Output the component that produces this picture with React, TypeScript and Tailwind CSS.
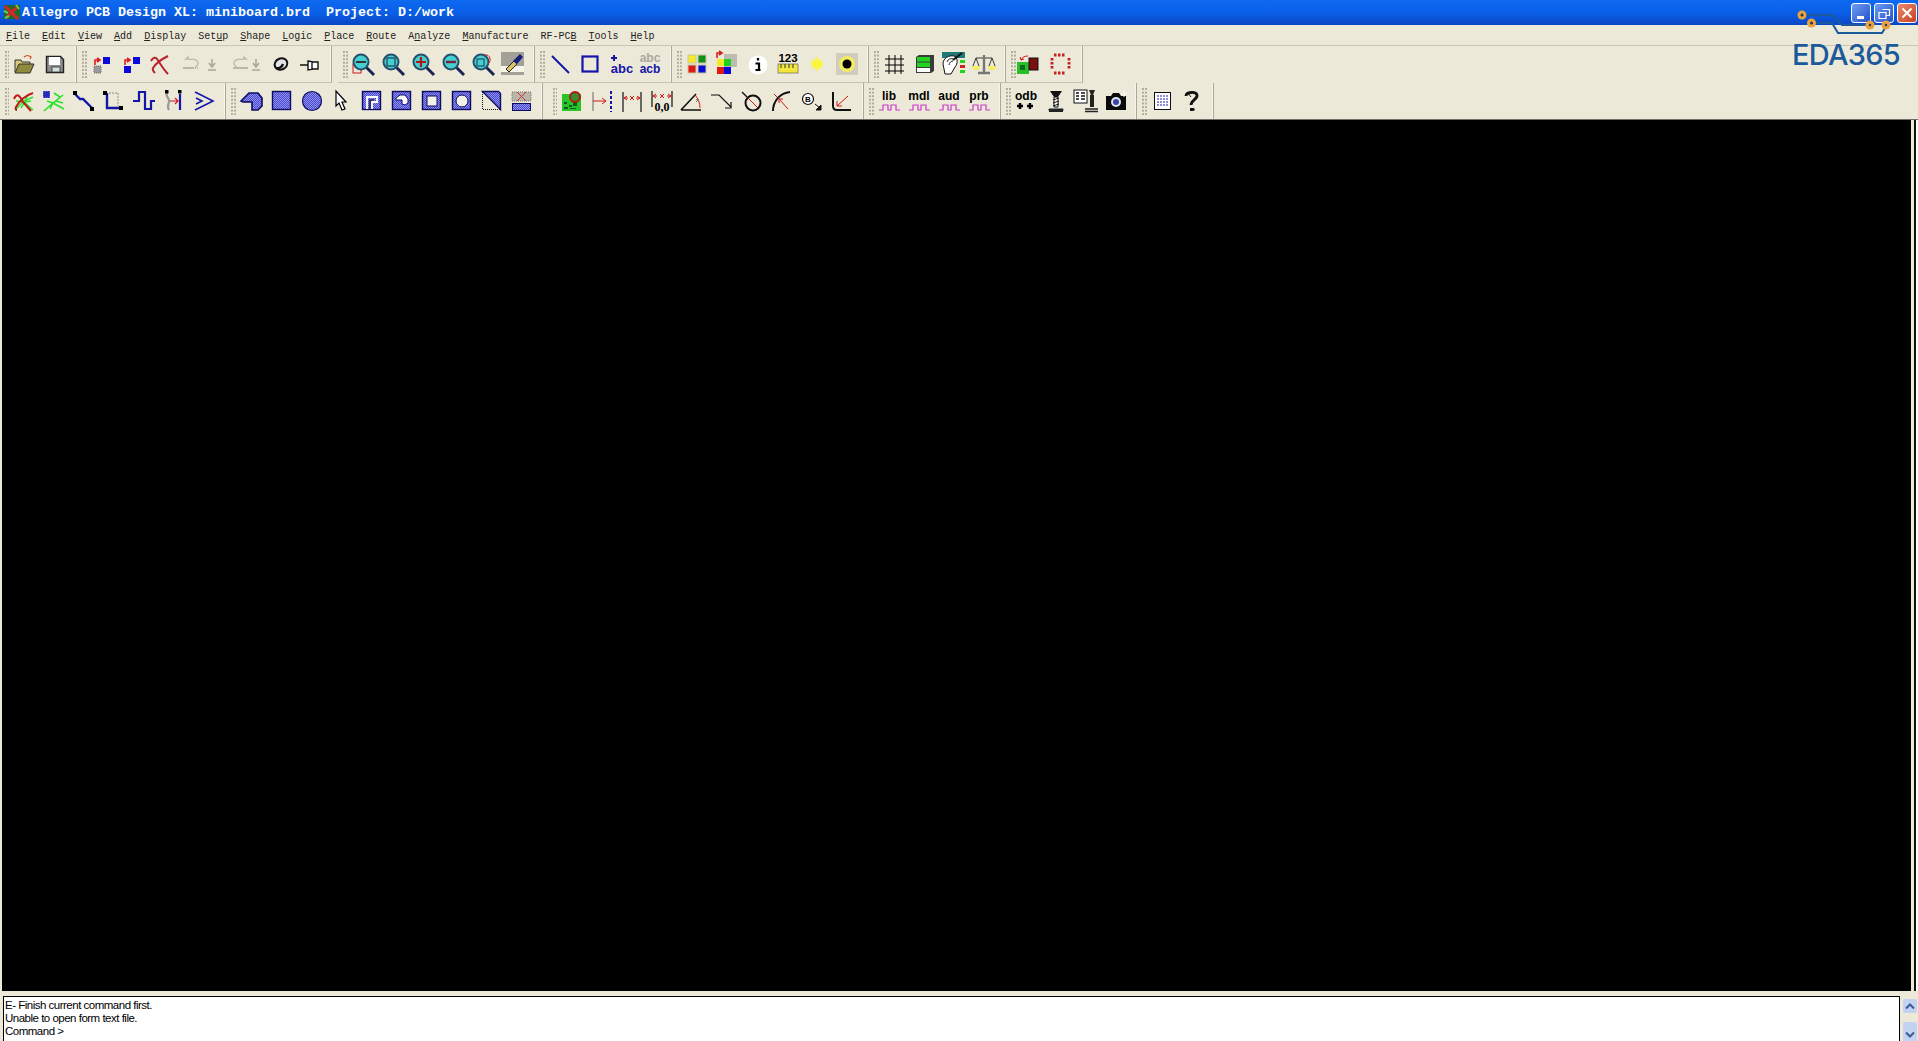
import React from 'react';

const BLUE = '#1515a8';
const HATCH = 'url(#hatch)';
const sans = '"Liberation Sans", Arial, sans-serif';

const Ico = ({ w = 24, children }: { w?: number; children: React.ReactNode }) => (
  <svg width={w} height={24} viewBox={`0 0 ${w} 24`} className="block overflow-visible">
    {children}
  </svg>
);

const Btn = ({ w = 24, children }: { w?: number; children: React.ReactNode }) => (
  <div className="flex h-full flex-none items-center px-[3px]">
    <Ico w={w}>{children}</Ico>
  </div>
);

const Grip = ({ width }: { width: string }) => (
  <div className={`flex h-full flex-none items-center ${width}`}>
    <svg width={10} height={28} className="block">
      {[0, 1, 2, 3, 4, 5, 6, 7].map((i) => (
        <g key={i} fill="#b1aea0">
          <rect x={5} y={1 + i * 3.6} width={2} height={2} />
          <rect x={8} y={1 + i * 3.6} width={2} height={2} />
        </g>
      ))}
    </svg>
  </div>
);

const Group = ({ width, grip = 'w-[10px]', children }: { width: string; grip?: string; children: React.ReactNode }) => (
  <div className={`flex h-full flex-none items-center border-r border-r-[#aaa899] shadow-[inset_-1px_0_0_#f7f5ea] ${width}`}>
    <Grip width={grip} />
    {children}
  </div>
);

// small red bent arrow used on the swap icons
const BentArrow = ({ x, y }: { x: number; y: number }) => (
  <path d={`M${x} ${y + 6}v-5h4m-2-2l3 2l-3 2`} fill="none" stroke="#d81e1e" strokeWidth={1.6} />
);

const Loupe = ({ children }: { children?: React.ReactNode }) => (
  <>
    <line x1={15} y1={15} x2={23} y2={23} stroke="#1a2355" strokeWidth={3} />
    <circle cx={10} cy={10} r={7.5} fill="#45cfd0" stroke="#27506a" strokeWidth={2} />
    {children}
  </>
);

const Label = ({ x, y, size, fill = '#000', children }: { x: number; y: number; size: number; fill?: string; children: React.ReactNode }) => (
  <text x={x} y={y} fontSize={size} fontWeight={700} fontFamily={sans} fill={fill} textAnchor="middle">
    {children}
  </text>
);

const Pulse = ({ name }: { name: string }) => (
  <>
    <Label x={12} y={11} size={12}>{name}</Label>
    <path d="M2 21h4v-5h5v5h3v-5h5v5h4" fill="none" stroke="#c83cc8" strokeWidth={1.2} />
  </>
);

const Row1 = () => (
  <div className="flex h-[37px] items-center [&>div]:border-b [&>div]:border-b-[#c6c3b3]">
    <Group width="w-[77px]" grip="w-[9px]">
      <Btn>
        <path d="M3 20V8h6l1 2h8v3" fill="#d8c878" stroke="#333" strokeWidth={1} />
        <path d="M3 21l4-9h15l-4 9z" fill="#8f8a3c" stroke="#333" strokeWidth={1} />
        <path d="M12 5c2-2 5-2 7 0l-1 2" fill="none" stroke="#d84a2a" strokeWidth={1.2} />
      </Btn>
      <Btn>
        <path d="M3.5 4.5h14l3 3v13h-17z" fill="#8e8e8e" stroke="#222" strokeWidth={1.4} transform="translate(1 0)" />
        <rect x={7} y={5} width={11} height={8} fill="#fff" />
        <rect x={10} y={15} width={8} height={5} fill="#d6e0e0" stroke="#333" strokeWidth={0.8} />
      </Btn>
    </Group>
    <Group width="w-[255px]">
      <Btn>
        <rect x={13} y={5} width={7} height={7} fill="#0a0ad8" />
        <rect x={4} y={14} width={7} height={7} fill="#999" stroke="#666" strokeDasharray="1 1" />
        <BentArrow x={5} y={7} />
      </Btn>
      <Btn>
        <rect x={13} y={5} width={7} height={7} fill="#0a0ad8" />
        <rect x={4} y={14} width={7} height={7} fill="#0a0ad8" />
        <BentArrow x={5} y={7} />
      </Btn>
      <Btn>
        <g transform="translate(-2 0)">
          <path d="M3 9c2-4 5-4 6-2c3 4 6 10 11 15M20 4C14 7 8 11 5 16c-1 2 0 3 2 5" fill="none" stroke="#b8232d" strokeWidth={2} />
        </g>
      </Btn>
      <Btn w={44}>
        <path d="M5 8l3-3v2.500c5-1 10 0 10 4c0 2-2 3-3 3" fill="none" stroke="#b9b8a8" strokeWidth={1.2} />
        <path d="M3 16h10" stroke="#b9b8a8" strokeWidth={2} />
        <path d="M13 16h6" stroke="#b9b8a8" strokeWidth={2} strokeDasharray="1 1" />
        <path d="M32 7v7m-3-3l3 4l3-4M28 18h8" fill="none" stroke="#a8a898" strokeWidth={1.5} />
      </Btn>
      <Btn w={34}>
        <path d="M17 8l-3-3v2.500c-5-1-10 0-10 4c0 2 2 3 3 3" fill="none" stroke="#b9b8a8" strokeWidth={1.2} />
        <path d="M3 16h15" stroke="#b9b8a8" strokeWidth={2} />
        <path d="M26 7v7m-3-3l3 4l3-4M22 18h8" fill="none" stroke="#a8a898" strokeWidth={1.5} />
      </Btn>
      <Btn>
        <g transform="translate(-2 0)">
          <ellipse cx={13} cy={12} rx={6.500} ry={5.500} fill="#e4e4e4" stroke="#111" strokeWidth={2} transform="rotate(-25 13 12)" />
          <path d="M8 16c3 1 6-1 7-4" fill="none" stroke="#111" strokeWidth={2.400} />
        </g>
      </Btn>
      <Btn>
        <g transform="translate(-2 0)">
          <path d="M2 13h8M10 9l5 1h5v7h-5l-5 1zM14 9v9" fill="#fff" stroke="#111" strokeWidth={1.4} />
        </g>
      </Btn>
    </Group>
    <Group width="ml-[6px] w-[197px]">
      <Btn>
        <rect x={2} y={12} width={8} height={9} fill="none" stroke="#d01818" strokeWidth={1} />
        <Loupe><path d="M5 10h10" stroke="#333" strokeWidth={2} /></Loupe>
      </Btn>
      <Btn>
        <Loupe><rect x={6} y={6} width={8} height={8} fill="none" stroke="#27506a" strokeWidth={1.4} /></Loupe>
      </Btn>
      <Btn>
        <Loupe><path d="M5 10h10M10 5v10" stroke="#b01818" strokeWidth={2.2} /></Loupe>
      </Btn>
      <Btn>
        <Loupe><path d="M5 10h10" stroke="#7a1f3a" strokeWidth={2.4} /></Loupe>
      </Btn>
      <Btn>
        <Loupe><rect x={6} y={7} width={7} height={7} fill="none" stroke="#27506a" strokeWidth={1.2} /></Loupe>
        <path d="M14 3c5-1 7 6 3 9" fill="none" stroke="#d01818" strokeWidth={1} />
      </Btn>
      <Btn>
        <rect x={0} y={0} width={23} height={23} fill="#a3a197" />
        <rect x={0} y={14} width={23} height={6} fill="#f6f4ea" />
        <path d="M5 17l8-8l3 3l-8 8z" fill="#d8c468" stroke="#222" strokeWidth={1} />
        <path d="M12 9l7-7l3 3l-6 7z" fill="#161e7a" />
      </Btn>
    </Group>
    <Group width="w-[137px]">
      <Btn><path d="M4 4l17 17" stroke={BLUE} strokeWidth={2} /></Btn>
      <Btn><rect x={4.5} y={4.5} width={15} height={15} fill="none" stroke={BLUE} strokeWidth={2.2} /></Btn>
      <Btn>
        <path d="M6 3v6M3 6h6" stroke={BLUE} strokeWidth={2} />
        <Label x={14} y={21} size={13} fill={BLUE}>abc</Label>
      </Btn>
      <Btn>
        <Label x={12} y={10} size={12} fill="#aaa89c">abc</Label>
        <Label x={12} y={21} size={12} fill={BLUE}>acb</Label>
      </Btn>
    </Group>
    <Group width="w-[197px]">
      <Btn>
        <g transform="translate(-1 0)">
          <rect x={4} y={3} width={8} height={8} fill="#f5ea28" stroke="#c8c8a0" />
          <rect x={14} y={3} width={8} height={8} fill="#109018" stroke="#c8c8a0" />
          <rect x={4} y={13} width={8} height={8} fill="#e01818" stroke="#c8c8a0" />
          <rect x={14} y={13} width={8} height={8} fill="#0a0ad8" stroke="#c8c8a0" />
        </g>
      </Btn>
      <Btn>
        <g transform="translate(-1 0)">
          <rect x={10} y={2} width={13} height={13} fill="#bdbcb0" />
          <rect x={3} y={7} width={7} height={7} fill="#f5ea28" />
          <rect x={10} y={7} width={7} height={7} fill="#22d022" />
          <rect x={3} y={15} width={7} height={7} fill="#e01818" />
          <rect x={10} y={15} width={7} height={7} fill="#0a0ad8" />
          <BentArrow x={3} y={0} />
        </g>
      </Btn>
      <Btn>
        <circle cx={12} cy={12} r={9.500} fill="#fff" transform="translate(1 1)" />
        <path d="M13 6v2.500M10.500 11.500h3.500v6.500h1.500M10.500 18h5" stroke="#000" strokeWidth={2.2} fill="none" />
      </Btn>
      <Btn>
        <g transform="translate(1 0)">
          <Label x={12} y={10} size={11.5}>123</Label>
          <rect x={2} y={12} width={20} height={9} fill="#f2e63c" stroke="#555" strokeWidth={0.6} />
          <path d="M5 12v4M9 12v4M13 12v4M17 12v4" stroke="#333" strokeWidth={1} />
        </g>
      </Btn>
      <Btn>
        <circle cx={12} cy={12} r={5} fill="#fbf53c" />
        <path d="M12 4v16M4 12h16M7 7l10 10M17 7L7 17" stroke="#fbf53c" strokeWidth={1} />
      </Btn>
      <Btn>
        <rect x={1} y={1} width={22} height={22} fill="#cfcdbf" />
        <circle cx={12} cy={12} r={8} fill="#f3ec60" />
        <circle cx={12} cy={12} r={4.500} fill="#000" />
      </Btn>
    </Group>
    <Group width="w-[137px]">
      <Btn><path d="M7 3v19M13 3v19M19 3v19M3 7h19M3 13h19M3 19h19" stroke="#000" strokeWidth={1} /></Btn>
      <Btn>
        <g transform="translate(1 0)">
          <path d="M3 5l3-2h15v16l-3 2H3z" fill="#3a3a3a" />
          <rect x={4} y={5} width={13} height={4.500} fill="#22d422" />
          <rect x={4} y={10.500} width={13} height={4.500} fill="#22d422" />
          <rect x={4} y={16} width={13} height={4} fill="#fff" />
        </g>
      </Btn>
      <Btn>
        <rect x={0} y={0} width={23} height={6} fill="#1d7a78" />
        <path d="M1 12c0-6 6-9 11-8c4 1 4 8 1 11l-4 7H3z" fill="#fff" stroke="#111" strokeWidth={1} />
        <path d="M5 10c1-3 4-4 6-3M7 13c0-2 2-4 4-4" stroke="#111" fill="none" />
        <path d="M11 8l9-7" stroke="#111" strokeWidth={2} />
        <rect x={18} y={8} width={5} height={3} fill="#22d422" />
        <rect x={18} y={13} width={5} height={3} fill="#d02020" />
        <rect x={18} y={18} width={5} height={3} fill="#22d422" />
      </Btn>
      <Btn>
        <path d="M4 6h16M4 6L1 14M4 6l3 8M20 6l-3 8M20 6l3 8" stroke="#3a3a3a" strokeWidth={1} fill="none" />
        <path d="M12 3v17M6 21h12" stroke="#777" strokeWidth={2.400} />
        <path d="M0 14h8a4 4 0 0 1-8 0zM16 14h8a4 4 0 0 1-8 0z" fill="#f4ee60" />
      </Btn>
    </Group>
    <Group width="w-[77px]">
      <Btn>
        <g transform="translate(-2 0)">
          <rect x={0} y={10} width={12} height={12} fill="#28c028" />
          <rect x={3} y={13} width={5} height={5} fill="#0f6a1e" />
          <rect x={12} y={6} width={9} height={12} fill="#7a0f12" stroke="#111" />
          <path d="M4 8c1-3 4-4 7-4M4 8l-1-3M4 8l3-1" fill="none" stroke="#d01818" strokeWidth={1} />
        </g>
      </Btn>
      <Btn>
        <path d="M5 3h12M3 6v12M20 6v12M5 21h12" fill="none" stroke="#c82020" strokeWidth={2.800} strokeDasharray="2.500 1.500" />
      </Btn>
    </Group>
  </div>
);

const Row2 = () => (
  <div className="flex h-[37px] items-center border-b border-b-[#6f6e66]">
    <Group width="w-[226px]" grip="w-[9px]">
      <Btn>
        <path d="M3 21l9-9l9-4M4 12l8 1l9 8M9 19l4-6l6-1M17 5l-5 8" fill="none" stroke="#2ae22a" strokeWidth={1.4} />
        <path d="M2 10c3-7 6-3 9 3l8 9M21 4C14 6 7 12 4 18c-1 2 0 3 1 3" fill="none" stroke="#c01818" strokeWidth={2} />
      </Btn>
      <Btn>
        <path d="M2 22l9-8l11 6M5 12l6 2l10-8M11 14l-3 6M21 14l-7-2M12 4l6 4" fill="none" stroke="#2ae22a" strokeWidth={1.600} />
        <rect x={1} y={2} width={7} height={7} fill="#2a2ab8" stroke="#fff" strokeWidth={0.5} strokeDasharray="1 1" />
      </Btn>
      <Btn>
        <path d="M3 5l5 5h3l9 9" fill="none" stroke={BLUE} strokeWidth={2.4} />
        <rect x={1} y={2} width={4} height={4} fill="#000" />
        <rect x={18} y={18} width={4} height={4} fill="#000" />
      </Btn>
      <Btn>
        <g transform="translate(-2 0)">
          <path d="M7 4v15h14" fill="none" stroke={BLUE} strokeWidth={2.4} />
          <path d="M9 4h9v13" fill="none" stroke="#aaa" strokeWidth={1.4} strokeDasharray="2 1" />
          <rect x={3} y={2} width={4} height={4} fill="#000" />
          <rect x={19} y={17} width={4} height={4} fill="#000" />
        </g>
      </Btn>
      <Btn>
        <g transform="translate(-1 0)">
          <path d="M2 12h6V3h6v17h6v-8h4" fill="none" stroke={BLUE} strokeWidth={2.2} />
        </g>
      </Btn>
      <Btn>
        <g transform="translate(-1 0)">
          <path d="M6 4c-2 4 3 5 2 9c-1 3-2 5 0 8" fill="none" stroke="#999" strokeWidth={2.2} />
          <path d="M19 5v16" stroke={BLUE} strokeWidth={2.2} />
          <path d="M9 12h8m-3-3l3 3l-3 3" fill="none" stroke="#d01818" strokeWidth={1.2} />
          <rect x={4} y={1} width={3.500} height={3.500} fill="#000" />
          <rect x={17} y={1} width={3.500} height={3.500} fill="#000" />
        </g>
      </Btn>
      <Btn><path d="M3 3l18 9l-18 9M4 9l6 3l-6 3" fill="none" stroke={BLUE} strokeWidth={1.6} /></Btn>
    </Group>
    <Group width="w-[317px]" grip="w-[11px]">
      <Btn><path d="M1 12l8-8h9l4 5v8l-4 4h-6v-8H3z" fill={HATCH} stroke="#0c0c60" strokeWidth={1.6} /></Btn>
      <Btn><rect x={2.500} y={2.500} width={18} height={18} fill={HATCH} stroke="#0c0c60" strokeWidth={1.4} /></Btn>
      <Btn><circle cx={12} cy={12} r={9.500} fill={HATCH} stroke="#0c0c60" strokeWidth={1.2} /></Btn>
      <Btn><path d="M6 2v15l3-3l3 7l3-1l-3-7h4z" fill="#fff" stroke="#000" strokeWidth={1.2} /></Btn>
      <Btn>
        <rect x={2.500} y={2.500} width={18} height={18} fill={HATCH} stroke="#0c0c60" strokeWidth={1.4} />
        <path d="M7 20V8h10v5h-5v7" fill="none" stroke="#fff" strokeWidth={1.800} />
        <path d="M10 20v-9h4" fill="none" stroke="#111" strokeWidth={1.200} />
      </Btn>
      <Btn>
        <rect x={2.500} y={2.500} width={18} height={18} fill={HATCH} stroke="#0c0c60" strokeWidth={1.4} />
        <path d="M6 9l4-3h5l3 4v4l-3 2l-3-1v-4H6z" fill="#fff" stroke="#0c0c60" />
      </Btn>
      <Btn>
        <rect x={2.500} y={2.500} width={18} height={18} fill={HATCH} stroke="#0c0c60" strokeWidth={1.4} />
        <rect x={7} y={7} width={10} height={10} fill="#f2f2e8" stroke="#0c0c60" />
      </Btn>
      <Btn>
        <rect x={2.500} y={2.500} width={18} height={18} fill={HATCH} stroke="#0c0c60" strokeWidth={1.4} />
        <circle cx={12} cy={12} r={6} fill="#f2f2e8" stroke="#0c0c60" />
      </Btn>
      <Btn>
        <path d="M2.500 2.500h16l2 2v16z" fill={HATCH} stroke="#0c0c60" strokeWidth={1.400} />
        <path d="M2.500 3v17.500h18" fill="none" stroke="#111" strokeDasharray="1 1" />
      </Btn>
      <Btn>
        <rect x={2} y={3} width={19} height={9} fill="#b9b7ab" stroke="#777" strokeDasharray="1 1" />
        <path d="M7 3l9 9M16 3l-9 9" stroke="#d83030" strokeWidth={1} />
        <rect x={2.500} y={14.500} width={18} height={7} fill={HATCH} stroke="#0c0c60" />
      </Btn>
    </Group>
    <Group width="ml-[5px] w-[316px]" grip="w-[9px]">
      <Btn>
        <rect x={2} y={5} width={19} height={17} fill="#28c428" />
        <path d="M4 13h3v2H4zM9 16h3v2H9zM13 13h4v4h-4zM4 18h4v2H4zM10 19h6v1h-6z" fill="#0d5c1e" />
        <circle cx={15} cy={8} r={5} fill="#3a8a2a" stroke="#b01818" strokeWidth={2} />
      </Btn>
      <Btn>
        <path d="M3 3v19" stroke="#aaa89c" strokeWidth={2} />
        <path d="M3 12h13m-4-3l4 3l-4 3" fill="none" stroke="#d01818" strokeWidth={1} />
        <path d="M21 2v21" stroke={BLUE} strokeWidth={2} strokeDasharray="3 2" />
      </Btn>
      <Btn>
        <path d="M3 3v20M21 3v20" stroke="#111" strokeWidth={1.2} />
        <path d="M4 9l3-2m-3 2l3 2M4 9h4M20 9l-3-2m3 2l-3 2M20 9h-4M10 7l4 4M14 7l-4 4" fill="none" stroke="#d01818" strokeWidth={1} />
      </Btn>
      <Btn>
        <path d="M2 2v16M22 2v16" stroke="#111" strokeWidth={1.2} />
        <path d="M3 7l3-2m-3 2l3 2M3 7h4M21 7l-3-2m3 2l-3 2M21 7h-4M10 5l4 4M14 5l-4 4" fill="none" stroke="#d01818" strokeWidth={1} />
        <text x={12} y={22} fontSize={12} fontWeight={700} fontFamily='"Liberation Serif", serif' textAnchor="middle" fill="#000">0,0</text>
      </Btn>
      <Btn>
        <path d="M1 21L16 5M1 21h20" stroke="#111" strokeWidth={1.6} />
        <path d="M15 6c3 3 5 8 5 13" fill="none" stroke="#d01818" strokeWidth={1} />
        <path d="M16 10l3 3M19 10l-3 3" stroke="#777" strokeWidth={1} />
      </Btn>
      <Btn>
        <path d="M1 6h8l12 12" fill="none" stroke="#111" strokeWidth={1.2} />
        <path d="M21 13v6h-6" fill="none" stroke="#111" strokeWidth={1.200} />
      </Btn>
      <Btn>
        <g transform="translate(1 0)">
          <path d="M1 3l5 5" stroke="#111" strokeWidth={1.400} />
          <circle cx={12} cy={14} r={7.500} fill="none" stroke="#111" strokeWidth={2} />
          <path d="M7 9l10 10" stroke="#d01818" strokeWidth={1} />
        </g>
      </Btn>
      <Btn>
        <path d="M3 22c0-10 7-18 17-19" fill="none" stroke="#111" strokeWidth={2} />
        <path d="M4 5l3 3M9 10l9 10M9 10v4M9 10h4" fill="none" stroke="#d01818" strokeWidth={1} />
      </Btn>
      <Btn>
        <circle cx={8} cy={10} r={5.500} fill="#fff" stroke="#111" strokeWidth={1.2} />
        <text x={8} y={13} fontSize={8} fontWeight={700} fontFamily={sans} textAnchor="middle" fill="#000">B</text>
        <path d="M15 15l5 4M21 16v5h-5z" stroke="#111" fill="#111" strokeWidth={1} />
      </Btn>
      <Btn>
        <g transform="translate(-1 0)">
          <path d="M4 3v14c0 3 1 4 4 4h14" fill="none" stroke="#111" strokeWidth={2} />
          <path d="M8 17L19 7" stroke="#d01818" strokeWidth={1} />
          <path d="M8 12v5h5" fill="none" stroke="#d01818" strokeWidth={1} />
        </g>
      </Btn>
    </Group>
    <Group width="w-[137px]">
      <Btn><Pulse name="lib" /></Btn>
      <Btn><Pulse name="mdl" /></Btn>
      <Btn><Pulse name="aud" /></Btn>
      <Btn><Pulse name="prb" /></Btn>
    </Group>
    <Group width="w-[136px]">
      <Btn>
        <Label x={12} y={11} size={12}>odb</Label>
        <path d="M6 14v6M3 17h6M16 14v6M13 17h6" stroke="#000" strokeWidth={2.400} />
      </Btn>
      <Btn>
        <path d="M6 2h12l-4 6h-4z" fill="#111" />
        <path d="M10 8h4v10h-4z" fill="#fff" stroke="#111" />
        <path d="M9 11l6-2M9 14l6-2M9 17l6-2" stroke="#111" />
        <path d="M5 20h14v1.500H5zM5 22.500h14" stroke="#222" fill="#222" />
      </Btn>
      <Btn>
        <rect x={0} y={1} width={13} height={13} fill="#fff" stroke="#111" />
        <path d="M2 4h3M7 4h4M2 7h3M7 7h4M2 10h3M7 10h4" stroke="#111" strokeWidth={1.400} />
        <path d="M15 1h6l-2 5h-2zM16 6h4v12h-4z" fill="#222" />
        <path d="M11 20h13M11 22.500h13" stroke="#222" strokeWidth={1.400} />
      </Btn>
      <Btn>
        <path d="M2 7h5l2-3h6l2 3h5v14H2z" fill="#0a0a0a" />
        <circle cx={12} cy={13} r={5} fill="#dfe6f2" />
        <circle cx={12} cy={13} r={3} fill="#3a46a8" />
        <path d="M20 2v6M17 5h6" stroke="#fff" strokeWidth={1} />
      </Btn>
    </Group>
    <Group width="w-[77px]" grip="w-[11px]">
      <Btn>
        <rect x={3.500} y={3.500} width={16} height={17} fill="#fff" stroke="#111" />
        <path d="M6 7h11M6 10h11M6 13h11M6 16h11" stroke="#6a6ac8" strokeWidth={1.400} strokeDasharray="2 1" />
      </Btn>
      <Btn>
        <path d="M5 7c0-4 10-5 11-1c1 4-6 5-6 10" fill="none" stroke="#111" strokeWidth={2.800} />
        <path d="M6 3l4 5" stroke="#111" strokeWidth={1} />
        <path d="M9 19h4l1 2-2 1H9z" fill="#111" />
      </Btn>
    </Group>
  </div>
);

const menu: [string, string, string][] = [
  ['', 'F', 'ile'],
  ['', 'E', 'dit'],
  ['', 'V', 'iew'],
  ['', 'A', 'dd'],
  ['', 'D', 'isplay'],
  ['Set', 'u', 'p'],
  ['', 'S', 'hape'],
  ['', 'L', 'ogic'],
  ['', 'P', 'lace'],
  ['', 'R', 'oute'],
  ['A', 'n', 'alyze'],
  ['', 'M', 'anufacture'],
  ['RF-PC', 'B', ''],
  ['', 'T', 'ools'],
  ['', 'H', 'elp'],
];

const WinBtn = ({ red, children }: { red?: boolean; children: React.ReactNode }) => (
  <div
    className={`flex h-[20px] w-[20px] items-center justify-center rounded-[3px] border border-white ${
      red ? 'bg-gradient-to-br from-[#e8886a] to-[#c8401e]' : 'bg-gradient-to-br from-[#6f9cf4] to-[#2450c8]'
    }`}
  >
    <svg width={14} height={14} className="block">{children}</svg>
  </div>
);

export default function App() {
  return (
    <div className="relative flex h-[1041px] w-[1918px] flex-col overflow-hidden bg-[#ece9d8]">
      <svg className="absolute h-0 w-0">
        <defs>
          <pattern id="hatch" width={2} height={2} patternUnits="userSpaceOnUse">
            <rect width={2} height={2} fill="#9090ee" />
            <rect width={1} height={1} fill="#4a4ad0" />
            <rect x={1} y={1} width={1} height={1} fill="#4a4ad0" />
          </pattern>
        </defs>
      </svg>

      {/* title bar */}
      <div className="flex h-[25px] flex-none items-center justify-between bg-gradient-to-b from-[#0e6af0] via-[#0a5fe8] to-[#0a46c4] pr-[1px]">
        <div className="flex items-center">
          <svg width={18} height={18} className="ml-[3px] block">
            <rect x={1} y={2} width={16} height={14} fill="#1f6a2a" />
            <path d="M2 3l13 13M15 3L3 15" stroke="#d8232a" strokeWidth={3} />
            <path d="M1 8l4 2M13 2l3 4M2 15l4-2" stroke="#5ed04a" strokeWidth={2} />
          </svg>
          <span className="ml-[1px] whitespace-pre font-['Liberation_Mono',monospace] text-[13.33px] font-bold text-white">
            Allegro PCB Design XL: miniboard.brd  Project: D:/work
          </span>
        </div>
        <div className="flex gap-[3px]">
          <WinBtn>
            <rect x={3} y={10} width={7} height={3} fill="#fff" />
          </WinBtn>
          <WinBtn>
            <path d="M5.500 3.500h7v6h-3M2 6.500h7v6H2z" fill="none" stroke="#fff" strokeWidth={1.200} />
          </WinBtn>
          <WinBtn red>
            <path d="M2.500 2.500l9 9M11.500 2.500l-9 9" stroke="#fff" strokeWidth={2} />
          </WinBtn>
        </div>
      </div>

      {/* menu bar */}
      <div className="flex h-[21px] flex-none items-center gap-3 border-b border-b-[#c9c6b6] pl-[6px] pt-[3px] font-['Liberation_Mono',monospace] text-[10px] text-[#222]">
        {menu.map(([a, u, b]) => (
          <span key={a + u + b} className="whitespace-pre">
            {a}
            <span className="underline">{u}</span>
            {b}
          </span>
        ))}
      </div>

      <Row1 />
      <Row2 />

      {/* canvas */}
      <div className="flex min-h-0 flex-1 pl-[2px]">
        <div className="min-w-0 flex-1 bg-black" />
        <div className="w-[3px] flex-none" />
        <div className="w-[2px] flex-none bg-[#111]" />
        <div className="w-[2px] flex-none bg-white" />
      </div>

      {/* command window */}
      <div className="flex h-[50px] flex-none pl-[3px] pt-[5px]">
        <div className="min-w-0 flex-1 border-l border-r border-t border-black bg-white pl-[1px] pt-[2px] font-['Liberation_Sans',Arial,sans-serif] text-[11.5px] leading-[13px] tracking-[-0.5px] text-black">
          <div>E- Finish current command first.</div>
          <div>Unable to open form text file.</div>
          <div>Command &gt;</div>
        </div>
        <div className="flex w-[18px] flex-none flex-col justify-between pl-[3px] pr-[1px] pt-[3px]">
          <div className="flex h-[14px] items-center justify-center rounded-[2px] bg-[#c4d2f2]">
            <svg width={12} height={8} className="block"><path d="M2 6.500l4-4l4 4" fill="none" stroke="#3a5a94" strokeWidth={2} /></svg>
          </div>
          <div className="flex h-[19px] flex-col justify-end rounded-t-[2px] bg-[#c4d2f2]">
            <svg width={14} height={12} className="block"><path d="M3 3.500l4 4l4-4" fill="none" stroke="#3a5a94" strokeWidth={2} /></svg>
          </div>
        </div>
      </div>

      {/* logo sits over the title bar and the toolbars */}
      <svg width={100} height={40} viewBox="0 0 100 40" className="absolute left-[1795px] top-[5px]">
        <path d="M7 10h30l10 10h30M16 18h21l6 10h44l5-8" fill="none" stroke="#1a5a9c" strokeWidth={2} />
        <g fill="#e9a23e">
          <circle cx={7} cy={10} r={4.500} />
          <circle cx={16.500} cy={18} r={4.500} />
          <circle cx={75} cy={20} r={4.500} />
          <circle cx={91} cy={20} r={4.500} />
        </g>
        <g fill="#24365a">
          <circle cx={7} cy={10} r={1.500} />
          <circle cx={16.500} cy={18} r={1.500} />
          <circle cx={75} cy={20} r={1.200} />
          <circle cx={91} cy={20} r={1.200} />
        </g>
      </svg>
      <span className="absolute left-[1792px] top-[38px] font-['Inter',sans-serif] text-[29px] font-medium leading-[33px] tracking-[-0.7px] text-[#1a5a9c]">
        EDA365
      </span>
    </div>
  );
}
